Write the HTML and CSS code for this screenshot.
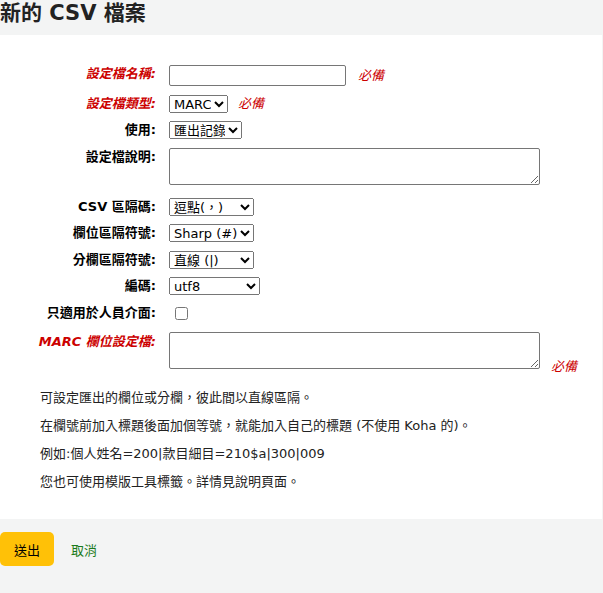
FILE: index.html
```html
<!DOCTYPE html>
<html lang="zh-Hant">
<head>
<meta charset="utf-8">
<title>新的 CSV 檔案</title>
<link rel="stylesheet" href="styles.css">
</head>
<body>
<h1 class="page-title">新的 CSV 檔案</h1>
<div class="panel">
  <ol class="rows first">
    <li class="row">
      <label class="lbl required">設定檔名稱:</label>
      <div class="field"><input type="text" class="txt"><span class="req">必備</span></div>
    </li>
    <li class="row">
      <label class="lbl required">設定檔類型:</label>
      <div class="field"><select class="sel w-marc"><option>MARC</option></select><span class="req req-sel">必備</span></div>
    </li>
    <li class="row">
      <label class="lbl">使用:</label>
      <div class="field"><select class="sel w-use"><option>匯出記錄</option></select></div>
    </li>
    <li class="row">
      <label class="lbl">設定檔說明:</label>
      <div class="field"><textarea class="area"></textarea></div>
    </li>
  </ol>
  <ol class="rows second">
    <li class="row">
      <label class="lbl">CSV 區隔碼:</label>
      <div class="field"><select class="sel w-sep"><option>逗點(，)</option></select></div>
    </li>
    <li class="row">
      <label class="lbl">欄位區隔符號:</label>
      <div class="field"><select class="sel w-sep"><option>Sharp (#)</option></select></div>
    </li>
    <li class="row">
      <label class="lbl">分欄區隔符號:</label>
      <div class="field"><select class="sel w-sep"><option>直線 (|)</option></select></div>
    </li>
    <li class="row">
      <label class="lbl">編碼:</label>
      <div class="field"><select class="sel w-enc"><option>utf8</option></select></div>
    </li>
    <li class="row">
      <label class="lbl">只適用於人員介面:</label>
      <div class="field"><input type="checkbox" class="chk"></div>
    </li>
    <li class="row">
      <label class="lbl required lbl-area">MARC 欄位設定檔:</label>
      <div class="field-inline"><textarea class="area"></textarea><span class="req req-area">必備</span></div>
    </li>
  </ol>
  <div class="help">
    <p>可設定匯出的欄位或分欄，彼此間以直線區隔。</p>
    <p>在欄號前加入標題後面加個等號，就能加入自己的標題 (不使用 Koha 的)。</p>
    <p>例如:個人姓名=200|款目細目=210$a|300|009</p>
    <p>您也可使用模版工具標籤。詳情見說明頁面。</p>
  </div>
</div>
<div class="actions">
  <button class="btn-submit" type="button">送出</button>
  <a class="cancel" href="#">取消</a>
</div>
</body>
</html>
```

FILE: styles.css
```css
html, body {
  margin: 0;
  padding: 0;
  background: #f3f4f4;
  font-family: "DejaVu Sans", "Noto Sans CJK TC", sans-serif;
  font-size: 13px;
  color: #000;
}

.page-title {
  margin: 0;
  height: 35px;
  font-size: 21px;
  line-height: 26px;
  font-weight: bold;
  color: #222;
}

.panel {
  background: #fff;
  width: 602px;
  padding: 30px 0 5px 0;
  box-sizing: border-box;
  height: 484px;
}

.rows {
  list-style: none;
  margin: 0;
  padding: 0;
  display: flex;
  flex-direction: column;
  gap: 8.5px;
}

.rows.second {
  margin-top: 13px;
}

.row {
  display: grid;
  grid-template-columns: 156px 1fr;
  column-gap: 13px;
  align-items: start;
}

.lbl {
  text-align: right;
  font-weight: bold;
  line-height: 18px;
  padding-top: 0;
}

.lbl-area {
  padding-top: 1px;
}

.lbl.required {
  color: #cc0000;
  font-style: italic;
}

.field {
  display: flex;
  align-items: center;
}

.field-inline {
  display: block;
  line-height: 16px;
}

.req {
  color: #cc0000;
  font-style: italic;
  margin-left: 12px;
  line-height: 16px;
}

.req-sel {
  margin-left: 10px;
}

.req-area {
  margin-left: 11px;
  vertical-align: -2px;
}

.txt {
  width: 177px;
  height: 21px;
  box-sizing: border-box;
  margin: 0;
  border: 1px solid #767676;
  border-radius: 2px;
  font-family: inherit;
  font-size: 13px;
}

.sel {
  height: 18px;
  box-sizing: border-box;
  margin: 0;
  font-family: inherit;
  font-size: 13px;
  padding: 0;
}

.w-marc { width: 59px; }
.w-use { width: 73px; }
.w-sep { width: 85px; }
.w-enc { width: 91px; }

.area {
  width: 371px;
  height: 37px;
  box-sizing: border-box;
  margin: 0;
  border: 1px solid #767676;
  border-radius: 2px;
  resize: both;
  vertical-align: baseline;
}

.chk {
  margin: 3.5px 0 3.5px 6px;
  width: 13px;
  height: 13px;
}

.help {
  padding: 14px 0 0 40px;
}

.help p {
  margin: 0 0 10px 0;
  height: 18px;
  line-height: 18px;
  color: #222;
  white-space: nowrap;
}

.actions {
  display: flex;
  align-items: center;
  padding-top: 13px;
  gap: 17px;
}

.btn-submit {
  background: #ffc107;
  border: none;
  border-radius: 5px;
  width: 54px;
  height: 34px;
  font-family: inherit;
  font-size: 13px;
  color: #000;
  padding: 0;
}

.cancel {
  color: #1a7a1a;
  text-decoration: none;
}
```
